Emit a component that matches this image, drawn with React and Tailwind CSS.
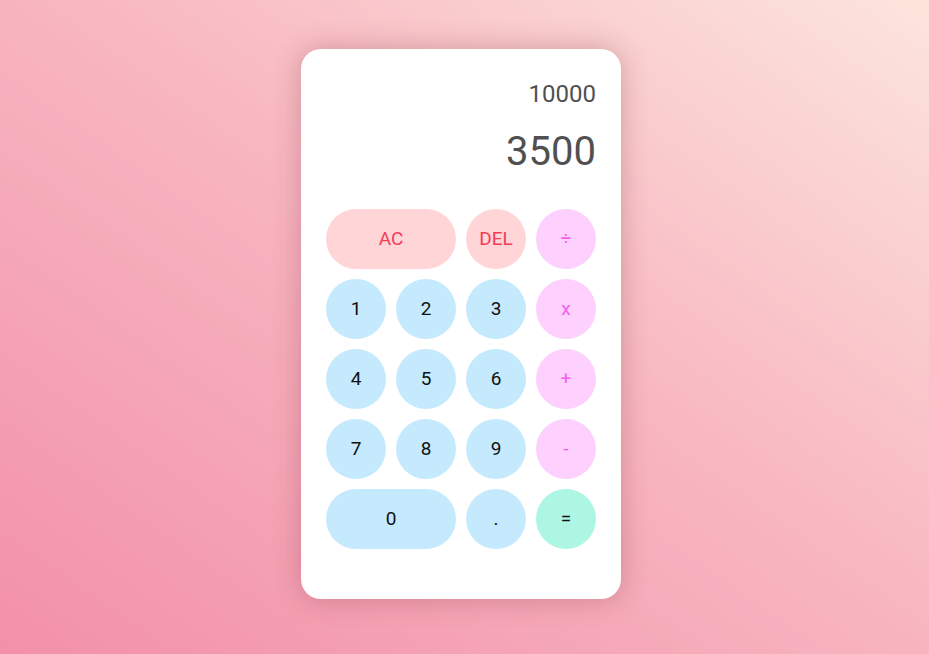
import React from "react";

const keys = [
  { label: "AC", kind: "clear", wide: true },
  { label: "DEL", kind: "clear" },
  { label: "÷", kind: "op" },
  { label: "1" },
  { label: "2" },
  { label: "3" },
  { label: "x", kind: "op" },
  { label: "4" },
  { label: "5" },
  { label: "6" },
  { label: "+", kind: "op" },
  { label: "7" },
  { label: "8" },
  { label: "9" },
  { label: "-", kind: "op" },
  { label: "0", wide: true },
  { label: "." },
  { label: "=", kind: "eq" },
];

const styles = {
  num: "bg-[#c5e9fd] text-[#111]",
  clear: "bg-[#ffd5d8] text-[#f33d55]",
  op: "bg-[#fdd0fd] text-[#f35ef0]",
  eq: "bg-[#aef6e4] text-[#111]",
};

export default function App() {
  return (
    <div className="min-h-screen w-full flex items-center justify-center pr-[7px] pb-[6px] bg-[linear-gradient(to_top_right,#f290a8,#f8b8c2_55%,#fce5dc)] font-['Roboto',sans-serif]">
      <div className="w-[320px] h-[550px] bg-white rounded-[20px] shadow-[0_0_28px_rgba(120,40,50,0.3)] px-[25px] pt-[29px]">
        <div className="flex flex-col items-end text-[#505050]">
          <div className="text-[24px] leading-[32px]">10000</div>
          <div className="text-[40px] leading-[48px] mt-[18px]">3500</div>
        </div>
        <div className="grid grid-cols-4 gap-[10px] mt-[33px]">
          {keys.map((k, i) => (
            <button
              key={i}
              className={`h-[60px] rounded-full text-[19px] flex items-center justify-center ${k.wide ? "col-span-2" : ""} ${styles[k.kind || "num"]}`}
            >
              {k.label}
            </button>
          ))}
        </div>
      </div>
    </div>
  );
}
